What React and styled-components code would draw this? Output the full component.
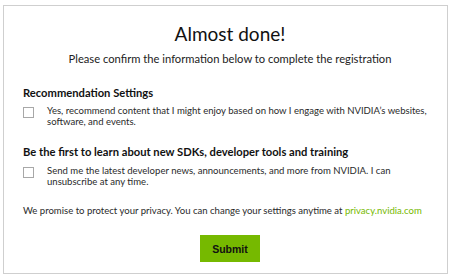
import React from "react";
import styled, { createGlobalStyle } from "styled-components";

const Global = createGlobalStyle`
  html, body { margin: 0; padding: 0; background: #fff; }
  body { font-family: Lato, "Noto Sans", sans-serif; color: #1a1a1a; }
`;

const Page = styled.div`
  padding: 5px 5px 5px 3px;
`;

const Card = styled.div`
  width: 445px;
  height: 269px;
  box-sizing: border-box;
  border: 1px solid #cfcfcf;
  padding: 0 10px 0 19px;
  display: flex;
  flex-direction: column;
`;

const Title = styled.h1`
  margin: 16px 0 0;
  text-align: center;
  font-size: 19px;
  font-weight: 400;
  line-height: 24px;
  color: #111;
`;

const Subtitle = styled.p`
  margin: 6px 0 0;
  text-align: center;
  font-size: 11.2px;
  line-height: 14px;
  color: #222;
`;

const Section = styled.div`
  margin-top: ${(p) => p.$mt}px;
  display: flex;
  flex-direction: column;
`;

const Heading = styled.h2`
  margin: 0;
  font-size: 11.2px;
  font-weight: 700;
  line-height: 14px;
  color: #111;
`;

const Row = styled.label`
  display: flex;
  align-items: flex-start;
  gap: 13px;
  margin-top: ${(p) => p.$mt}px;
  font-size: 9.55px;
  line-height: 11px;
  color: #2a2a2a;
`;

const Box = styled.span`
  flex: none;
  width: 11px;
  height: 11px;
  box-sizing: border-box;
  border: 1px solid #a8a8a8;
  margin-top: 2px;
`;

const Privacy = styled.p`
  margin: 17px 0 0;
  font-size: 9.55px;
  line-height: 14px;
  color: #2a2a2a;
`;

const Link = styled.a`
  color: #76b900;
  text-decoration: none;
`;

const Button = styled.button`
  align-self: center;
  margin-top: 17px;
  width: 60px;
  height: 27px;
  border: none;
  background: #76b900;
  font-family: "Liberation Sans", Arial, sans-serif;
  font-weight: 700;
  font-size: 10.5px;
  color: #111;
  padding: 0;
`;

export default function App() {
  return (
    <>
      <Global />
      <Page>
        <Card>
          <Title>Almost done!</Title>
          <Subtitle>Please confirm the information below to complete the registration</Subtitle>
          <Section $mt={20}>
            <Heading>Recommendation Settings</Heading>
            <Row $mt={5}>
              <Box />
              <span>
                Yes, recommend content that I might enjoy based on how I engage with NVIDIA’s websites,
                software, and events.
              </span>
            </Row>
          </Section>
          <Section $mt={18}>
            <Heading>Be the first to learn about new SDKs, developer tools and training</Heading>
            <Row $mt={6}>
              <Box />
              <span>
                Send me the latest developer news, announcements, and more from NVIDIA. I can
                unsubscribe at any time.
              </span>
            </Row>
          </Section>
          <Privacy>
            We promise to protect your privacy. You can change your settings anytime at{" "}
            <Link href="#">privacy.nvidia.com</Link>
          </Privacy>
          <Button>Submit</Button>
        </Card>
      </Page>
    </>
  );
}
